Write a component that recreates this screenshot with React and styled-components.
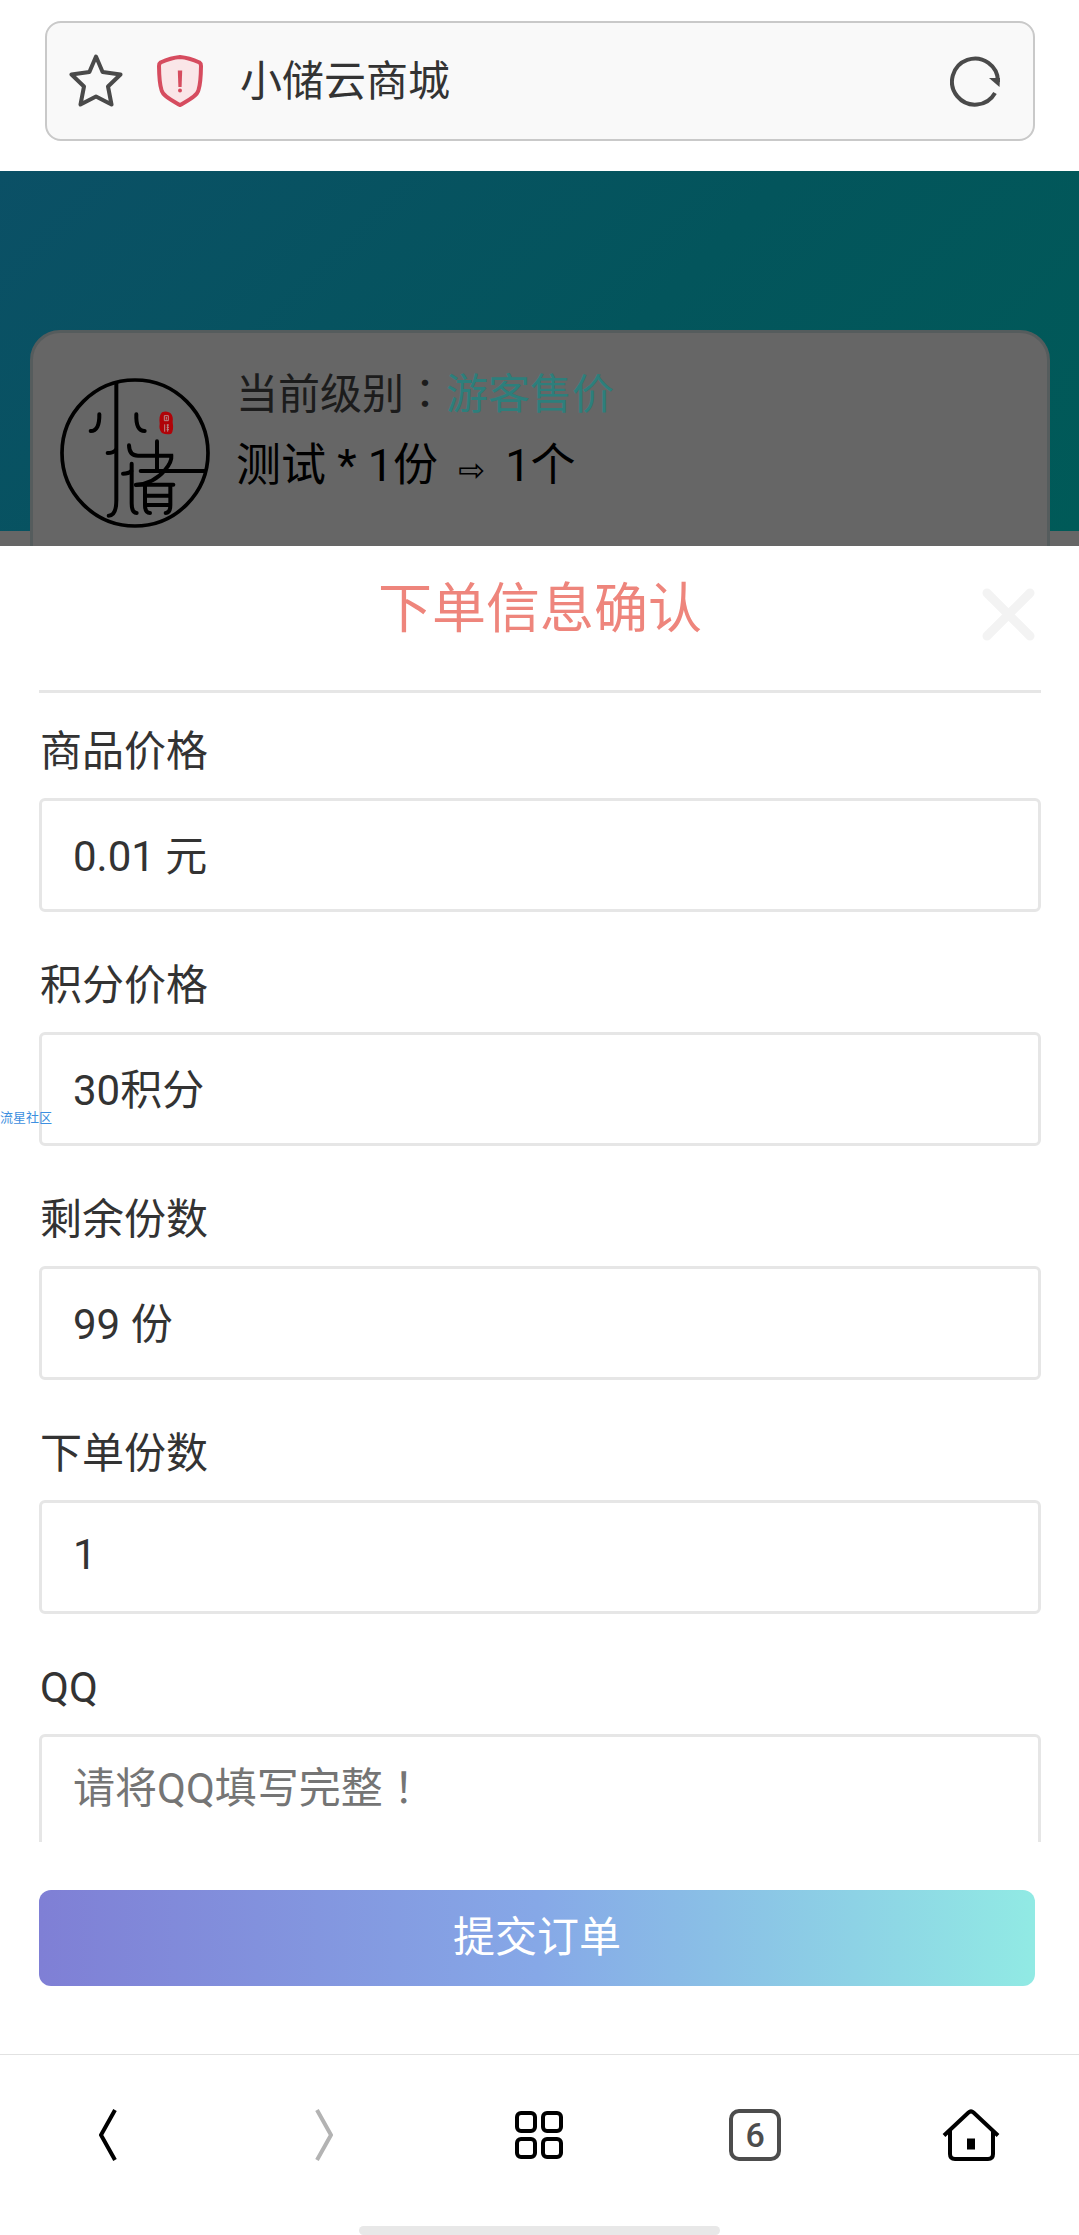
import { useState } from "react";
import styled, { createGlobalStyle, css, ThemeProvider } from "styled-components";

const theme = {
  ink: "#333",
  line: "#e6e6e6",
  salmon: "#ee857c",
  teal: "#2d7f7c",
  shade: "#666",
  font: `Roboto, "Noto Sans CJK SC", sans-serif`,
  // centred full-width punctuation
  fontPunct: `Roboto, "Noto Sans CJK TC", sans-serif`,
};

const fields = [
  { id: "price", label: "商品价格", value: "0.01 元", readOnly: true },
  { id: "points", label: "积分价格", value: "30积分", readOnly: true },
  { id: "stock", label: "剩余份数", value: "99 份", readOnly: true },
  { id: "count", label: "下单份数", value: "1" },
  { id: "qq", label: "QQ", value: "", placeholder: "请将QQ填写完整！" },
];

const StarIcon = () => (
  <svg width="54" height="54" viewBox="0 0 54 54" fill="none">
    <path
      d="M27 2.500 L33.600 18 L51.500 20.500 L39 32.500 L42.500 50.500 L27 42.500 L11.500 50.500 L15 32.500 L2.500 20.500 L20.400 18 Z"
      stroke="#4a4a4a"
      strokeWidth="4"
      strokeLinejoin="round"
    />
  </svg>
);

const ShieldIcon = () => (
  <svg width="46" height="52" viewBox="0 0 46 52">
    <path
      d="M23 2 C29 2.500 37 5 42.500 7.500 Q44 8.500 44 11 Q43.800 28 41.500 35 C40.500 41 30 46 23 50 C16 46 5.500 41 4.500 35 Q2.200 28 2 11 Q2 8.500 3.500 7.500 C9 5 17 2.500 23 2 Z"
      fill="#fae6e8"
      stroke="#d64c5f"
      strokeWidth="4"
      strokeLinejoin="round"
    />
    <path d="M20.800 15.500 H25.200 L24.600 32 H21.400 Z" fill="#d64c5f" />
    <circle cx="23" cy="35.500" r="2" fill="#d64c5f" />
  </svg>
);

const ReloadIcon = () => (
  <svg width="50" height="52" viewBox="0 0 50 52">
    <path
      d="M45 38 A23 23 0 1 1 48 27"
      fill="none"
      stroke="#4a4a4a"
      strokeWidth="4"
    />
    <path d="M39 23 L50 23 L49.500 32 Z" fill="#4a4a4a" />
  </svg>
);

const ShopLogo = () => (
  <svg width="150" height="150" viewBox="30 39 450 450" fill="none">
    <g stroke="#000" strokeWidth="12" strokeLinecap="round">
      <circle cx="255" cy="264" r="219" strokeWidth="11" />
      <path d="M199 55 V405 Q199 452 176 452" />
      <path d="M148 148 Q149 198 122 198" />
      <path d="M259 148 Q257 198 284 198" />
      <path d="M173 264 Q190 264 198 254" />
      <path d="M237 241 Q238 272 264 272 H364 Q366 290 345 315 Q312 355 258 360" />
      <path d="M321 229 V318" />
      <path d="M272 318 H465" />
      <path d="M219 326 Q236 326 244 318" />
      <path d="M245 296 V415 Q245 444 260 444" />
      <path d="M258 359 H370" />
      <path d="M285 362 V420 Q285 444 300 444" />
      <path d="M361 362 V420 Q361 444 347 444" />
      <path d="M288 392 H358 M288 420 H358" />
    </g>
    <path
      d="M336 142 Q350 136 361 144 Q371 154 368 172 Q372 196 364 206 Q350 210 336 204 Q326 194 329 176 Q326 152 336 142 Z"
      fill="#b00308"
    />
    <path
      d="M343 152 H355 V167 H343 Z M349 156 V164 M344 178 V200 M350 180 H357 M350 187 H357 M350 194 H357 M353 178 V200"
      stroke="#b58a8a"
      strokeWidth="3"
    />
  </svg>
);

const CloseIcon = () => (
  <svg width="53" height="53" viewBox="0 0 53 53">
    <path
      d="M5 5 L48 48 M48 5 L5 48"
      stroke="#f3f3f3"
      strokeWidth="9"
      strokeLinecap="round"
    />
  </svg>
);

const ChevronIcon = ({ forward }) => (
  <svg width="18" height="52" viewBox="0 0 18 52" fill="none">
    <path
      d={forward ? "M2 1 L16 26 L2 51" : "M16 1 L2 26 L16 51"}
      stroke={forward ? "#b3b3b3" : "#000"}
      strokeWidth="4"
    />
  </svg>
);

const GridIcon = () => (
  <svg width="48" height="48" viewBox="0 0 48 48" fill="none">
    <g stroke="#000" strokeWidth="4">
      <rect x="2" y="2" width="18" height="18" rx="4" />
      <rect x="28" y="2" width="18" height="18" rx="4" />
      <rect x="2" y="28" width="18" height="18" rx="4" />
      <rect x="28" y="28" width="18" height="18" rx="4" />
    </g>
  </svg>
);

const HomeIcon = () => (
  <svg width="58" height="52" viewBox="0 0 58 52" fill="none">
    <g stroke="#000" strokeWidth="4">
      <path d="M2 26.500 L26.500 3.500 Q29 1.300 31.500 3.500 L56 26.500" />
      <path d="M8 21 V45 Q8 50 13 50 H46 Q51 50 51 45 V21" />
    </g>
    <rect x="25" y="29.500" width="8" height="11" fill="#000" />
  </svg>
);

const Field = ({ id, label, value, placeholder, readOnly }) => {
  const [text, setText] = useState(value);
  return (
    <FieldRow>
      <label htmlFor={id}>{label}</label>
      <FieldInput
        id={id}
        type="text"
        value={text}
        placeholder={placeholder}
        readOnly={readOnly}
        onChange={(e) => setText(e.target.value)}
      />
    </FieldRow>
  );
};

const App = () => (
  <ThemeProvider theme={theme}>
    <GlobalStyle />
    <Screen>
      <TopBar>
        <AddressBar>
          <IconButton aria-label="收藏">
            <StarIcon />
          </IconButton>
          <IconButton aria-label="安全提示">
            <ShieldIcon />
          </IconButton>
          <div className="site">小储云商城</div>
          <IconButton aria-label="刷新">
            <ReloadIcon />
          </IconButton>
        </AddressBar>
      </TopBar>

      <Backdrop>
        <ProductCard>
          <ShopLogo />
          <div>
            <Level>
              当前级别<span className="punct">：</span>
              <span className="level">游客售价</span>
            </Level>
            <Product>
              测试 * 1份 <span className="arrow">⇨</span> 1个
            </Product>
          </div>
        </ProductCard>
      </Backdrop>

      <Sheet>
        <SheetHead>
          <h1>下单信息确认</h1>
          <IconButton type="button" className="close" aria-label="关闭">
            <CloseIcon />
          </IconButton>
        </SheetHead>
        <Fields>
          {fields.map((field) => (
            <Field key={field.id} {...field} />
          ))}
        </Fields>
        <SheetFoot>
          <SubmitButton type="submit">提交订单</SubmitButton>
        </SheetFoot>
      </Sheet>

      <BrowserNav>
        <IconButton aria-label="后退">
          <ChevronIcon />
        </IconButton>
        <IconButton aria-label="前进">
          <ChevronIcon forward />
        </IconButton>
        <IconButton aria-label="菜单">
          <GridIcon />
        </IconButton>
        <IconButton aria-label="标签页">
          <TabCount>6</TabCount>
        </IconButton>
        <IconButton aria-label="主页">
          <HomeIcon />
        </IconButton>
      </BrowserNav>
      <HomeIndicator />
      <Watermark>流星社区</Watermark>
    </Screen>
  </ThemeProvider>
);

export default App;

const GlobalStyle = createGlobalStyle`
  * {
    box-sizing: border-box;
  }
  body {
    margin: 0;
    background: white;
  }
  button, input {
    font: inherit;
    color: inherit;
  }
  svg {
    display: block;
  }
`;

const Screen = styled.div`
  ${({ theme }) => css`
    position: relative;
    display: flex;
    flex-direction: column;
    height: 100vh;
    overflow: hidden;
    background: white;
    color: ${theme.ink};
    font-family: ${theme.font};
    font-size: 42px;
    line-height: 60px;
  `}
`;

const IconButton = styled.button`
  display: flex;
  align-items: center;
  justify-content: center;
  padding: 0;
  border: 0;
  background: none;
  cursor: pointer;
`;

const TopBar = styled.header`
  flex: none;
  padding: 21px 44px 30px 45px;
`;

const AddressBar = styled.div`
  display: flex;
  align-items: center;
  height: 120px;
  padding: 0 33px 0 22px;
  border: 2px solid #c9c9c9;
  border-radius: 16px;
  background: #f9f9f9;
  gap: 34px;
  .site {
    flex: 1;
    padding: 2px 0 0 3px;
  }
`;

const Backdrop = styled.div`
  ${({ theme }) => css`
    flex: none;
    display: flex;
    height: 375px;
    padding: 159px 29px 0 30px;
    overflow: hidden;
    background: linear-gradient(135deg, #0b5066 0%, #03555c 55%, #005a58 100%)
      0 0 / 100% 360px no-repeat ${theme.shade};
  `}
`;

const ProductCard = styled.section`
  ${({ theme }) => css`
    flex: 1;
    display: flex;
    align-items: flex-start;
    gap: 26px;
    height: 400px;
    padding: 45px 27px;
    border: 3px solid #555c5d;
    border-radius: 30px;
    background: ${theme.shade};
  `}
`;

const Level = styled.div`
  ${({ theme }) => css`
    line-height: 34px;
    color: #1c1c1c;
    .punct {
      font-family: ${theme.fontPunct};
    }
    .level {
      color: ${theme.teal};
    }
  `}
`;

const Product = styled.div`
  padding-top: 24px;
  color: #000;
  font-size: 45px;
  .arrow {
    margin: 0 9px;
    font-family: "DejaVu Sans", sans-serif;
    font-size: 32px;
  }
`;

const Sheet = styled.form`
  flex: 1;
  display: flex;
  flex-direction: column;
  min-height: 0;
`;

const SheetHead = styled.div`
  ${({ theme }) => css`
    flex: none;
    display: grid;
    grid-template-columns: 1fr auto 1fr;
    align-items: start;
    height: 147px;
    margin: 0 38px 0 39px;
    border-bottom: 3px solid ${theme.line};
    h1 {
      grid-column: 2;
      margin: 0;
      color: ${theme.salmon};
      font-size: 54px;
      font-weight: 400;
      line-height: 128px;
    }
    .close {
      justify-self: end;
      padding: 42px 6px 0;
    }
  `}
`;

const Fields = styled.div`
  flex: 1;
  display: flex;
  flex-direction: column;
  gap: 42px;
  min-height: 0;
  padding: 27px 38px 0 39px;
  overflow-y: auto;
  scrollbar-width: none;
`;

const FieldRow = styled.div`
  flex: none;
  display: flex;
  flex-direction: column;
  gap: 14px;
  label {
    padding-left: 1px;
    line-height: 64px;
  }
`;

const FieldInput = styled.input`
  ${({ theme }) => css`
    width: 100%;
    height: 114px;
    padding: 0 31px 5px;
    border: 3px solid ${theme.line};
    border-radius: 6px;
    outline: none;
    background: white;
    &::placeholder {
      color: #757575;
      font-family: ${theme.fontPunct};
      opacity: 1;
    }
  `}
`;

const SheetFoot = styled.div`
  flex: none;
  padding: 48px 44px 68px 39px;
`;

const SubmitButton = styled.button`
  display: block;
  width: 100%;
  height: 96px;
  padding: 0;
  border: 0;
  border-radius: 12px;
  background: linear-gradient(to right, #7f7fd5, #86a8e7, #91eae4);
  color: white;
  cursor: pointer;
`;

const BrowserNav = styled.nav`
  flex: none;
  display: grid;
  grid-template-columns: repeat(5, 1fr);
  height: 161px;
  border-top: 1px solid #e2e2e2;
`;

const TabCount = styled.span`
  width: 52px;
  height: 52px;
  border: 4px solid #4d4d4d;
  border-radius: 10px;
  color: #4d4d4d;
  font-size: 34px;
  font-weight: 500;
  line-height: 44px;
`;

const HomeIndicator = styled.div`
  flex: none;
  align-self: center;
  width: 33.4%;
  height: 9px;
  margin-top: 11px;
  border-radius: 5px;
  background: #e8e8e8;
`;

/* floats over whatever is on screen, half way down the left edge */
const Watermark = styled.div`
  position: absolute;
  top: 50%;
  left: 0;
  transform: translateY(-50%);
  color: #3d8fe0;
  font-size: 13px;
  line-height: 16px;
`;
